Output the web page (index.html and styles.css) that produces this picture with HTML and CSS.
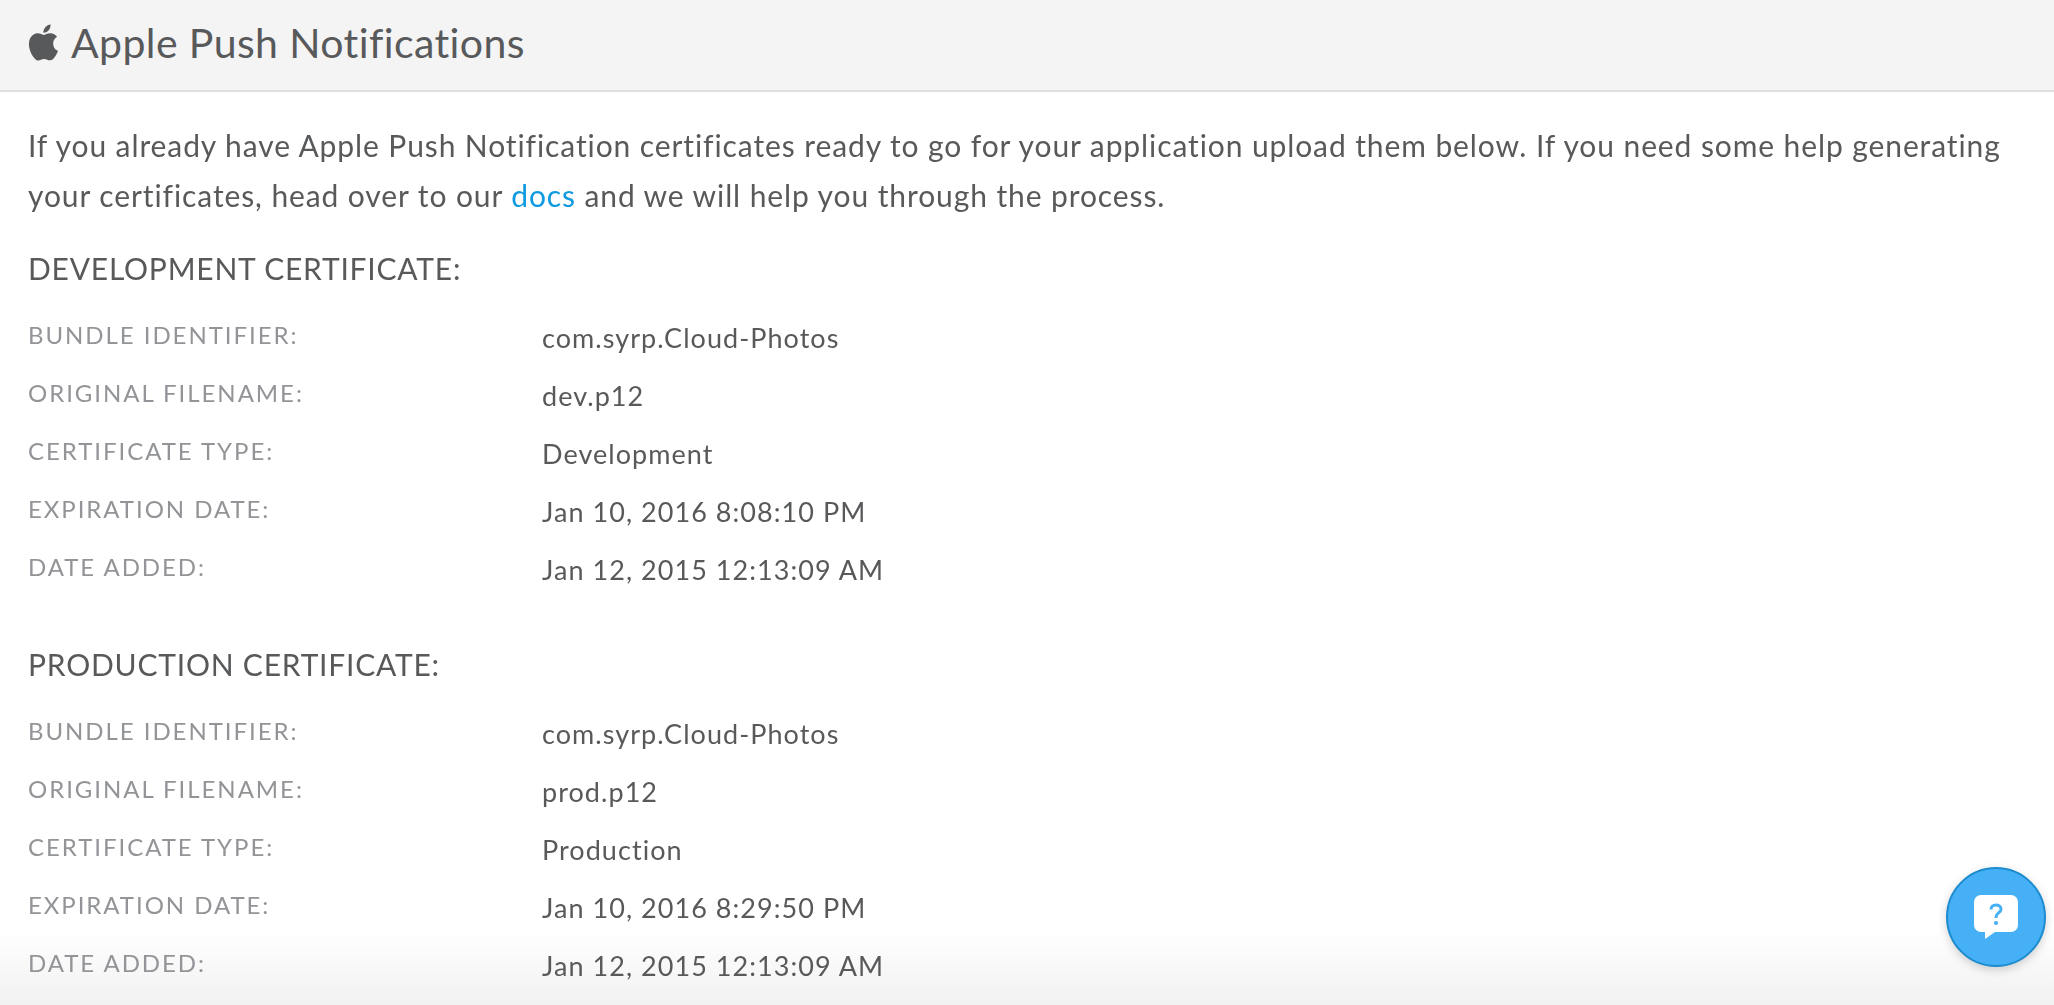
FILE: index.html
```html
<!DOCTYPE html>
<html lang="en">
<head>
<meta charset="utf-8">
<title>Apple Push Notifications</title>
<link rel="stylesheet" href="styles.css">
</head>
<body>
<header class="bar">
  <svg class="apple" viewBox="0 0 24 24" aria-hidden="true"><path d="M18.71 19.5c-.83 1.24-1.71 2.45-3.05 2.47-1.34.03-1.77-.79-3.29-.79-1.53 0-2 .77-3.27.82-1.31.05-2.3-1.32-3.14-2.53C4.25 17 2.94 12.45 4.7 9.39c.87-1.52 2.43-2.48 4.12-2.51 1.28-.02 2.5.87 3.29.87.78 0 2.26-1.07 3.8-.91.65.03 2.47.26 3.64 1.98-.09.06-2.17 1.28-2.15 3.81.03 3.02 2.65 4.03 2.68 4.04-.03.07-.42 1.44-1.38 2.83M13 3.5c.73-.83 1.94-1.46 2.94-1.5.13 1.17-.34 2.35-1.04 3.19-.69.85-1.83 1.51-2.95 1.42-.15-1.15.41-2.35 1.05-3.11z"/></svg>
  <h1 class="title">Apple Push Notifications</h1>
</header>
<main class="content">
  <p class="intro">If you already have Apple Push Notification certificates ready to go for your application upload them below. If you need some help generating your certificates, head over to our <a class="link" href="#">docs</a> and we will help you through the process.</p>
  <section class="cert">
    <h2 class="cert-title">DEVELOPMENT CERTIFICATE:</h2>
    <dl class="rows">
      <div class="row"><dt class="key">BUNDLE IDENTIFIER:</dt><dd class="val">com.syrp.Cloud-Photos</dd></div>
      <div class="row"><dt class="key">ORIGINAL FILENAME:</dt><dd class="val">dev.p12</dd></div>
      <div class="row"><dt class="key">CERTIFICATE TYPE:</dt><dd class="val">Development</dd></div>
      <div class="row"><dt class="key">EXPIRATION DATE:</dt><dd class="val">Jan 10, 2016 8:08:10 PM</dd></div>
      <div class="row"><dt class="key">DATE ADDED:</dt><dd class="val">Jan 12, 2015 12:13:09 AM</dd></div>
    </dl>
  </section>
  <section class="cert">
    <h2 class="cert-title">PRODUCTION CERTIFICATE:</h2>
    <dl class="rows">
      <div class="row"><dt class="key">BUNDLE IDENTIFIER:</dt><dd class="val">com.syrp.Cloud-Photos</dd></div>
      <div class="row"><dt class="key">ORIGINAL FILENAME:</dt><dd class="val">prod.p12</dd></div>
      <div class="row"><dt class="key">CERTIFICATE TYPE:</dt><dd class="val">Production</dd></div>
      <div class="row"><dt class="key">EXPIRATION DATE:</dt><dd class="val">Jan 10, 2016 8:29:50 PM</dd></div>
      <div class="row"><dt class="key">DATE ADDED:</dt><dd class="val">Jan 12, 2015 12:13:09 AM</dd></div>
    </dl>
  </section>
</main>
<div class="fade"></div>
<button class="help" type="button" aria-label="Help">
  <svg class="help-icon" viewBox="0 0 44 44" aria-hidden="true">
    <path fill="#fff" d="M7 0h30a7 7 0 0 1 7 7v23a7 7 0 0 1-7 7H21L11 44v-7H7a7 7 0 0 1-7-7V7a7 7 0 0 1 7-7z"/>
    <path fill="none" stroke="#45b0f5" stroke-width="3" d="M17 14.5c0-2.8 2.1-4.5 5-4.5s5 1.6 5 4.2c0 3.8-5 3.6-5 7.8v1"/>
    <circle cx="22" cy="28" r="2.1" fill="#45b0f5"/>
  </svg>
</button>
</body>
</html>
```
FILE: styles.css
```css
* { box-sizing: border-box; }
html, body { height: 100%; }
body {
  margin: 0;
  overflow: hidden;
  background: #fff;
  color: #58595b;
  font-family: Lato, "Open Sans", sans-serif;
  font-variant-ligatures: none;
}
.bar {
  display: flex;
  align-items: center;
  gap: 6px;
  height: 92px;
  padding: 0 0 5px 22px;
  background: #f4f4f4;
  border-bottom: 2px solid #dfdfdf;
}
.apple { width: 43px; height: 43px; fill: #58595b; }
.title { margin: 0; font-size: 41px; font-weight: 400; letter-spacing: .4px; }
.content { position: relative; z-index: 1; padding: 28px 28px 0; }
.intro { margin: 0; font-size: 30px; line-height: 50px; letter-spacing: .9px; }
.link { color: #0f9ae0; text-decoration: none; }
.cert { margin-bottom: 41px; }
.cert-title { margin: 23px 0 0; font-size: 30px; line-height: 50px; font-weight: 400; letter-spacing: .78px; }
.rows { margin: 0; padding-top: 15px; }
.row { display: grid; grid-template-columns: 514px 1fr; height: 58px; align-items: center; }
.key { font-size: 24px; letter-spacing: 1.95px; color: #929497; margin-top: -5px; }
.val { margin: 0; font-size: 27px; letter-spacing: 1.05px; }
.fade {
  position: fixed;
  left: 0; right: 0; bottom: 0;
  height: 75px;
  background: linear-gradient(rgba(242,242,242,0), #f1f1f1);
  pointer-events: none;
}
.help {
  position: fixed;
  z-index: 2;
  right: 8px;
  bottom: 38px;
  width: 100px;
  height: 100px;
  padding: 0;
  display: flex;
  align-items: center;
  justify-content: center;
  border-radius: 50%;
  border: 2px solid #1d8ccf;
  background: #45b0f5;
  box-shadow: 0 3px 10px rgba(0,0,0,.18);
}
.help-icon { width: 44px; height: 44px; }
```
